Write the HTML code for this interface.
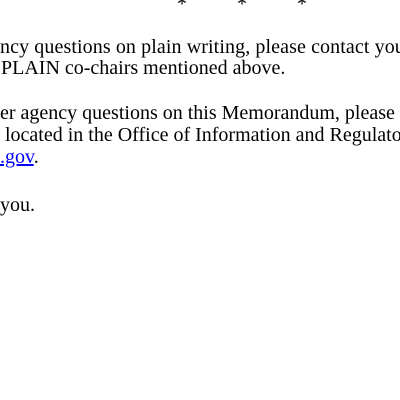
<!DOCTYPE html>
<html><head><style>
body{margin:0;width:400px;height:400px;background:#fff;overflow:hidden;position:relative;font-family:"Liberation Serif",serif;font-size:20px;color:#000}
.l{position:absolute;white-space:nowrap;line-height:22px}
a{color:#00f;text-decoration:underline}
</style></head><body>
<div class="l" style="left:177px;top:-7px">*</div>
<div class="l" style="left:237px;top:-7px">*</div>
<div class="l" style="left:297px;top:-7px">*</div>
<div class="l" style="left:0;top:36px;letter-spacing:0.1px">ncy questions on plain writing, please contact your</div>
<div class="l" style="left:1px;top:57px">PLAIN co-chairs mentioned above.</div>
<div class="l" style="left:0;top:102px">er agency questions on this Memorandum, please</div>
<div class="l" style="left:0;top:124px">&nbsp;located in the Office of Information and Regulatory</div>
<div class="l" style="left:0;top:146px"><a>.gov</a>.</div>
<div class="l" style="left:0;top:194px">you.</div>
</body></html>
